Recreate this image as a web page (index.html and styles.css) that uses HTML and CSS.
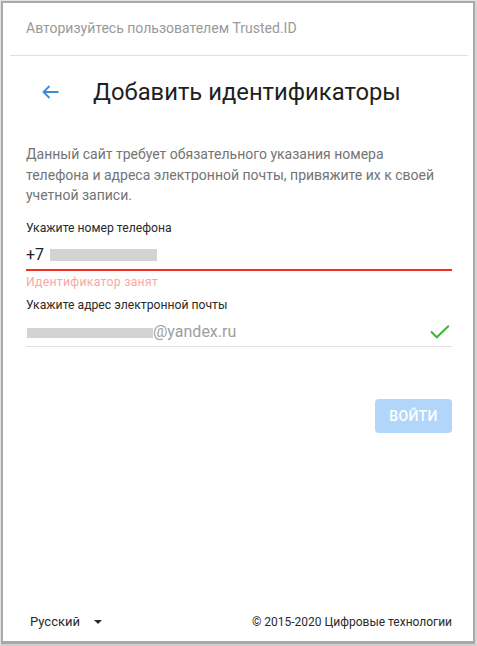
FILE: index.html
```html
<!DOCTYPE html>
<html lang="ru">
<head>
<meta charset="utf-8">
<title>Trusted.ID</title>
<link rel="stylesheet" href="styles.css">
</head>
<body>
<div class="window">
  <div class="card">
    <div class="header">Авторизуйтесь пользователем Trusted.ID</div>
    <div class="content">
      <div class="title-row">
        <span class="back">
          <svg width="17" height="14" viewBox="0 0 17 14"><path d="M1.5 7H16.5M7.5 1L1.5 7L7.5 13" fill="none" stroke="#3f8ad8" stroke-width="1.8"/></svg>
        </span>
        <h1 class="title">Добавить идентификаторы</h1>
      </div>
      <p class="desc">Данный сайт требует обязательного указания номера телефона и адреса электронной почты, привяжите их к своей учетной записи.</p>

      <div class="field">
        <div class="label">Укажите номер телефона</div>
        <div class="input input-error">
          <span class="value">+7</span>
          <span class="mask mask-phone"></span>
        </div>
        <div class="error">Идентификатор занят</div>
      </div>

      <div class="field field-email">
        <div class="label">Укажите адрес электронной почты</div>
        <div class="input">
          <span class="mask mask-email"></span>
          <span class="value value-muted">@yandex.ru</span>
          <svg class="check" width="20" height="14" viewBox="0 0 20 14"><path d="M1 6.5L6.8 12.3L18.8 0.8" fill="none" stroke="#3db53d" stroke-width="2"/></svg>
        </div>
      </div>

      <div class="actions">
        <button class="btn" type="button">ВОЙТИ</button>
      </div>
    </div>
    <div class="footer">
      <div class="lang">Русский <span class="caret"></span></div>
      <div class="copy">© 2015-2020 Цифровые технологии</div>
    </div>
  </div>
</div>
</body>
</html>
```
FILE: styles.css
```css
html, body {
  margin: 0;
  padding: 0;
  height: 100%;
}
body {
  background: #e4e4e4;
  font-family: Roboto, "Noto Sans", Arial, sans-serif;
}
.window {
  box-sizing: border-box;
  width: 477px;
  height: 646px;
  border-style: solid;
  border-color: #e2e2e2 #d6d6d6 #d0d0d0 #e2e2e2;
  border-width: 1px 2px 2px 1px;
  background: #a9a9a9;
  padding: 2px 2px 3px 2px;
}
.card {
  background: #fff;
  height: 100%;
  display: flex;
  flex-direction: column;
  box-sizing: border-box;
}
.header {
  margin: 0 5px 0 7px;
  padding: 15px 16px 17px 16px;
  font-size: 14px;
  line-height: 20px;
  color: #9a9a9a;
  border-bottom: 1px solid #e0e0e0;
}
.content {
  padding: 0 21px 0 23px;
}
.title-row {
  display: flex;
  align-items: center;
  margin-top: 20px;
  height: 32px;
}
.back {
  display: flex;
  margin-left: 16px;
  width: 17px;
  margin-right: 34px;
}
.title {
  margin: 0;
  font-size: 23.8px;
  line-height: 32px;
  font-weight: 400;
  color: #1f1f1f;
}
.desc {
  margin: 36px 10px 0 0;
  font-size: 14px;
  line-height: 20.5px;
  color: #747474;
}
.field {
  margin-top: 14px;
}
.label {
  font-size: 12.2px;
  line-height: 16px;
  color: #2a2a2a;
}
.input {
  display: flex;
  align-items: center;
  height: 24px;
  margin-top: 7px;
  padding-bottom: 2px;
  border-bottom: 1px solid #e0e0e0;
}
.input-error {
  border-bottom: 2px solid #f32f22;
  padding-bottom: 2px;
}
.value {
  font-size: 16px;
  line-height: 24px;
  color: #222;
}
.value-muted {
  color: #9e9e9e;
}
.mask {
  display: block;
  background: #d3d3d3;
  height: 12px;
}
.mask-phone {
  width: 107px;
  margin-left: 6px;
}
.mask-email {
  width: 126px;
  height: 10px;
  margin-top: 2px;
  margin-left: 1px;
}
.check {
  margin-left: auto;
  margin-right: 2px;
}
.error {
  margin-top: 3px;
  font-size: 12.2px;
  line-height: 16px;
  color: #f8a8a5;
  letter-spacing: 0.3px;
}
.field-email {
  margin-top: 7px;
}
.actions {
  display: flex;
  justify-content: flex-end;
  margin-top: 52px;
}
.btn {
  width: 77px;
  height: 34px;
  border: 0;
  border-radius: 4px;
  background: #b2d6fa;
  color: #fff;
  font-family: Roboto, "Noto Sans", Arial, sans-serif;
  font-size: 14px;
  font-weight: 500;
  letter-spacing: 0.3px;
  padding: 0;
}
.footer {
  margin-top: auto;
  display: flex;
  justify-content: space-between;
  align-items: center;
  padding: 0 21px 9px 27px;
  line-height: 20px;
  color: #2a2a2a;
}
.lang {
  display: flex;
  align-items: center;
  font-size: 13px;
}
.copy {
  font-size: 12px;
}
.caret {
  display: inline-block;
  margin-left: 14px;
  width: 0;
  height: 0;
  border-left: 4px solid transparent;
  border-right: 4px solid transparent;
  border-top: 4px solid #2a2a2a;
}
```
